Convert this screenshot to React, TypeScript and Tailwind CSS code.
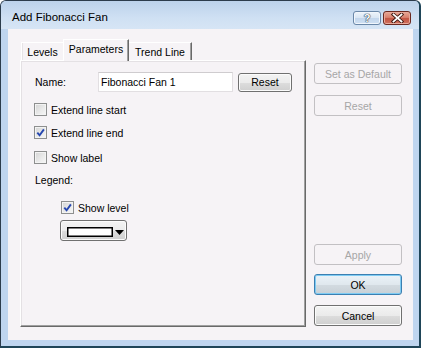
import React from "react";

const F = "font-['Liberation_Sans',Arial,sans-serif]";

const BTN =
  "border-[#707070] bg-[linear-gradient(to_bottom,#f3f3f3_0%,#ebebeb_50%,#dddddd_51%,#cfcfcf_100%)] shadow-[inset_0_0_0_1px_#fbfbfb] text-black";

function Check({ checked }: { checked?: boolean }) {
  return (
    <div className="relative w-[13px] h-[13px] shrink-0 border border-[#8e8f8f] bg-[linear-gradient(135deg,#d4d4d4_0%,#e9e9e9_55%,#f7f7f7_100%)] shadow-[inset_0_0_0_1px_#f3f3f3]">
      {checked && (
        <svg className="absolute left-0 top-0" width="11" height="11" viewBox="0 0 11 11">
          <path d="M2.3 5.6 L4.6 8.3 L8.9 2.4" fill="none" stroke="#2747b0" strokeWidth="1.9" strokeLinejoin="miter" />
        </svg>
      )}
    </div>
  );
}

function CheckRow({ label, checked, className = "" }: { label: string; checked?: boolean; className?: string }) {
  return (
    <div className={`flex items-center h-[13px] gap-[4px] ${className}`}>
      <Check checked={checked} />
      <span className="leading-[12px]">{label}</span>
    </div>
  );
}

function Button({
  children,
  kind = "normal",
  className = "",
}: {
  children: React.ReactNode;
  kind?: "normal" | "disabled" | "default";
  className?: string;
}) {
  const k =
    kind === "disabled"
      ? "border-[#c2c0c3] bg-[#f6f3f6] text-[#a6a6a6]"
      : kind === "default"
      ? "border-[#3c7fb1] bg-[linear-gradient(to_bottom,#eaf2f8_0%,#e0e8ee_50%,#d3dbe1_51%,#c8d0d6_100%)] shadow-[inset_0_0_0_1px_#7ecbf3] text-black"
      : BTN;
  return (
    <div className={`flex items-center justify-center rounded-[3px] border leading-[12px] ${k} ${className}`}>
      {children}
    </div>
  );
}

export default function App() {
  return (
    <div className={`${F} text-[10.5px] text-black w-[421px] h-[348px] overflow-hidden`}>
      <div className="w-[421px] h-[348px] flex flex-col rounded-t-[6px] border-l border-t border-r-2 border-b-2 border-[#2c3c4c] border-r-[#1f4558] border-b-[#1f4558] bg-[#bfd5ef]">
        {/* Title bar */}
        <div className="h-[28px] flex items-start rounded-t-[5px] bg-[linear-gradient(to_bottom,#bcd2eb_0%,#cfe0f3_60%,#d6e5f5_100%)]">
          <div className="pl-[11px] pt-[10px] text-[11.5px] leading-[12px] text-black">Add Fibonacci Fan</div>
          <div className="ml-auto mr-[8px] mt-[10px] flex gap-[2px]">
            <div className="w-[28px] h-[14px] rounded-[3px] border border-[#6a87a8] bg-[linear-gradient(to_bottom,#eef4fb_0%,#d9e6f4_50%,#c3d6ec_51%,#cfe0f3_100%)] shadow-[inset_0_0_0_1px_#f1f6fc] flex items-center justify-center">
              <span className="text-[11px] leading-[11px] font-bold text-white [text-shadow:0_0_1px_#2a3a4e,0_0_1px_#2a3a4e,0_0_1px_#2a3a4e]">?</span>
            </div>
            <div className="w-[28px] h-[14px] rounded-[3px] border border-[#6b2a21] bg-[linear-gradient(to_bottom,#e7a896_0%,#d9826f_45%,#c25543_55%,#d1725f_100%)] shadow-[inset_0_0_0_1px_#e8a99a] flex items-center justify-center">
              <svg width="13" height="10" viewBox="0 0 13 10">
                <path d="M2.5 1.5 L10.5 8.5 M10.5 1.5 L2.5 8.5" stroke="#3d1810" strokeWidth="3.6" strokeLinecap="square" />
                <path d="M2.5 1.5 L10.5 8.5 M10.5 1.5 L2.5 8.5" stroke="#ffffff" strokeWidth="1.8" strokeLinecap="square" />
              </svg>
            </div>
          </div>
        </div>

        {/* Body with frame */}
        <div className="flex pl-[7px] pr-[6px] pb-[6px]">
          <div className="w-[405px] h-[311px] bg-[#f6f3f6] flex pl-[12px] pt-[10px] pb-[13px]">
            {/* Left: tabs + panel */}
            <div className="w-[286px] flex flex-col">
              <div className="h-[21px] flex items-end pl-[1px] relative z-10">
                <div className="w-[42px] h-[18px] border-t border-l border-white shadow-[inset_1px_0_0_#e6e3e6] flex justify-center pt-[3px] leading-[12px]">
                  Levels
                </div>
                <div className="w-[66px] h-[22px] mb-[-1px] bg-[#f6f3f6] border-t border-l border-white border-r border-r-[#696969] shadow-[inset_-1px_0_0_#a0a0a0] flex justify-center pt-[3px] leading-[12px]">
                  Parameters
                </div>
                <div className="w-[63px] h-[18px] border-t border-white border-r border-r-[#696969] shadow-[inset_-1px_0_0_#a0a0a0] flex justify-center pt-[3px] leading-[12px]">
                  Trend Line
                </div>
              </div>
              <div className="flex-1 border border-white border-r-[#696969] border-b-[#696969] shadow-[inset_-1px_-1px_0_#a0a0a0,inset_1px_1px_0_#e4e1e4] flex flex-col pl-[13px] pt-[11px]">
                <div className="flex items-center h-[20px]">
                  <span className="w-[63px] ml-[1px] leading-[12px]">Name:</span>
                  <div className="w-[135px] h-[20px] bg-white border border-[#e2dfe2] border-t-[#cfcccf] flex items-center pl-[2px] leading-[12px]">
                    Fibonacci Fan 1
                  </div>
                  <Button className="ml-[5px] w-[54px] h-[19px]">Reset</Button>
                </div>
                <CheckRow className="mt-[11px]" label="Extend line start" />
                <CheckRow className="mt-[10px]" label="Extend line end" checked />
                <CheckRow className="mt-[12px]" label="Show label" />
                <div className="mt-[10px] ml-[1px] leading-[12px]">Legend:</div>
                <CheckRow className="mt-[15px] ml-[27px]" label="Show level" checked />
                <div className={`mt-[6px] ml-[26px] w-[67px] h-[21px] rounded-[3px] border flex items-start pl-[6px] ${BTN}`}>
                  <div className="mt-[6px] w-[46px] h-[10px] bg-white border border-black shadow-[inset_0_0_0_0.5px_#000]" />
                  <svg className="mt-[9px] ml-[2px]" width="9" height="5" viewBox="0 0 9 5">
                    <polygon points="0,0 9,0 4.5,5" fill="#000" />
                  </svg>
                </div>
              </div>
            </div>

            {/* Right column buttons */}
            <div className="ml-[8px] w-[88px] flex flex-col pb-[1px]">
              <Button kind="disabled" className="mt-[24px] h-[21px]">Set as Default</Button>
              <Button kind="disabled" className="mt-[11px] h-[21px]">Reset</Button>
              <Button kind="disabled" className="mt-auto h-[21px]">Apply</Button>
              <Button kind="default" className="mt-[9px] h-[21px]">OK</Button>
              <Button className="mt-[10px] h-[21px]">Cancel</Button>
            </div>
          </div>
        </div>
      </div>
    </div>
  );
}
